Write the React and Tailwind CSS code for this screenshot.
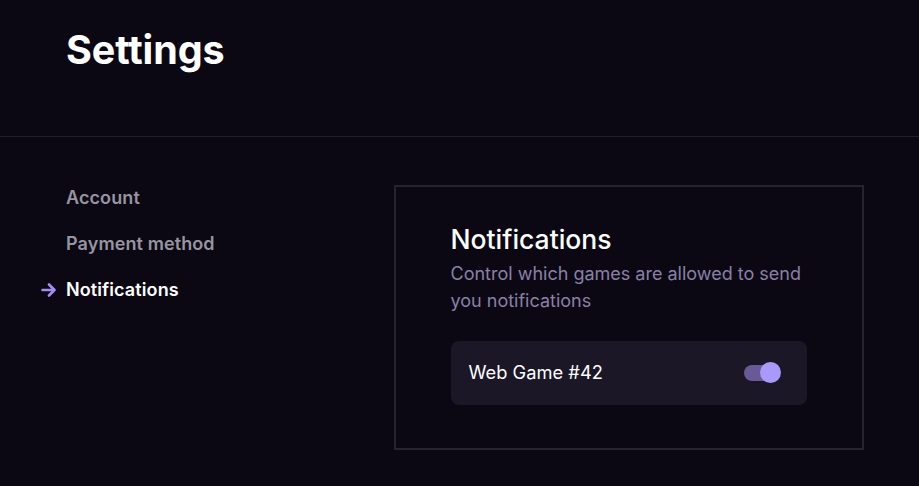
import React, { useState } from "react";

const NAV = ["Account", "Payment method", "Notifications"];

export default function App() {
    const [active, setActive] = useState("Notifications");
    const [enabled, setEnabled] = useState(true);

    return (
        <div
            className="min-h-screen w-full bg-[#0b0814] text-white"
            style={{ fontFamily: "Inter, 'Noto Sans', sans-serif" }}
        >
            <header className="h-[137px] border-b border-[#221e2d] px-[66px] pt-[24px]">
                <h1 className="text-[39.5px] font-bold leading-[52px] tracking-[-0.1px]">Settings</h1>
            </header>

            <div className="flex pl-[66px] pr-[55px] pt-[48px]">
                {/* Sidebar */}
                <nav className="w-[328px] flex flex-col gap-[22px] pt-[1px]">
                    {NAV.map((item) => (
                        <button
                            key={item}
                            onClick={() => setActive(item)}
                            className={`relative text-left text-[18px] font-semibold leading-[24px] tracking-[0.1px] ${
                                active === item ? "text-white" : "text-[#9795a0]"
                            }`}
                        >
                            {active === item && (
                                <svg
                                    className="absolute left-[-25px] top-[5px]"
                                    width="15"
                                    height="14"
                                    viewBox="0 0 15 14"
                                    fill="none"
                                    stroke="#a48cf5"
                                    strokeWidth="2.6"
                                    strokeLinecap="round"
                                    strokeLinejoin="round"
                                >
                                    <path d="M1.5 7h12M8 1.5L13.5 7 8 12.5" />
                                </svg>
                            )}
                            {item}
                        </button>
                    ))}
                </nav>

                {/* Card */}
                <section className="w-[471px] border-2 border-[#27232f] px-[55px] pt-[34px] pb-[43px]">
                    <h2 className="text-[26.5px] font-medium leading-[36px]">Notifications</h2>
                    <p className="mt-[3px] text-[18px] leading-[27px] text-[#8a80a6]">
                        Control which games are allowed to send you notifications
                    </p>
                    <div className="mt-[27px] h-[64px] rounded-lg bg-[#1b1727] flex items-center justify-between pl-[18px] pr-[33px]">
                        <span className="text-[18.3px]">Web Game #42</span>
                        <button
                            onClick={() => setEnabled(!enabled)}
                            className={`relative h-[16px] w-[30px] rounded-full ${
                                enabled ? "bg-[#675a96]" : "bg-[#3a3548]"
                            }`}
                        >
                            <span
                                className={`absolute top-[-3px] h-[21px] w-[21px] rounded-full bg-[#a899fa] ${
                                    enabled ? "left-[16px]" : "left-[-4px]"
                                }`}
                            />
                        </button>
                    </div>
                </section>
            </div>
        </div>
    );
}
